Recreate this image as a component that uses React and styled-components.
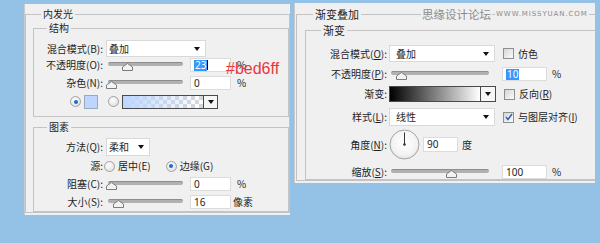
import React from "react";
import styled, { createGlobalStyle } from "styled-components";

const GlobalStyle = createGlobalStyle`
  html, body { margin: 0; padding: 0; }
  body {
    width: 600px;
    height: 243px;
    overflow: hidden;
    background: #93c2e6;
    font-family: "Noto Sans CJK SC", "Noto Sans", sans-serif;
    font-size: 10px;
    color: #1e1e1e;
  }
`;

const Page = styled.div`
  display: flex;
  align-items: flex-start;
  gap: 4px;
  padding: 3px 0 0 24px;
`;

const Panel = styled.div`
  width: ${(p) => p.$w}px;
  height: ${(p) => p.$h}px;
  margin-top: ${(p) => p.$mt || 0}px;
  box-sizing: border-box;
  background: #f0f0f0;
  border-left: 1px solid #c9c9c9;
  overflow: hidden;
`;

const Group = styled.fieldset`
  margin: ${(p) => p.$mt || 0}px 0 0 ${(p) => p.$ml || 0}px;
  padding: 0 0 ${(p) => p.$pb || 0}px ${(p) => p.$pl || 0}px;
  width: ${(p) => (p.$w ? `${p.$w}px` : "auto")};
  border: 1px solid #c3c3c3;
  min-width: 0;
  min-inline-size: 0;
  box-sizing: border-box;
  position: relative;
`;

const Legend = styled.legend`
  padding: 0 2px;
  margin-left: ${(p) => p.$ml}px;
  font-size: ${(p) => p.$fs || 10}px;
  line-height: 14px;
  color: #1e1e1e;
`;

const Row = styled.div`
  display: flex;
  align-items: center;
  height: ${(p) => p.$h}px;
  margin-top: ${(p) => p.$mt || 0}px;
  padding-left: ${(p) => p.$pl || 0}px;
  position: relative;
`;

const Label = styled.span`
  flex: none;
  width: ${(p) => p.$w}px;
  margin-right: ${(p) => p.$gap ?? 3}px;
  text-align: right;
  white-space: nowrap;
  line-height: 14px;
`;

const Key = styled.span`
  text-decoration: underline;
`;

const Select = styled.div`
  flex: none;
  width: ${(p) => p.$w}px;
  height: ${(p) => p.$h}px;
  box-sizing: border-box;
  background: #fff;
  border: 1px solid #d9d9d9;
  display: flex;
  align-items: center;
  justify-content: space-between;
  padding: 0 5px 0 ${(p) => p.$pl || 2}px;
  line-height: 14px;
`;

const Arrow = styled.span`
  width: 0;
  height: 0;
  border-left: 3.5px solid transparent;
  border-right: 3.5px solid transparent;
  border-top: 4px solid #111;
`;

const SliderBox = styled.div`
  flex: none;
  position: relative;
  width: ${(p) => p.$w}px;
  height: 14px;
  &::before {
    content: "";
    position: absolute;
    left: 2px;
    right: 0;
    top: 4px;
    height: 3px;
    border-radius: 2px;
    background: #b1b1b1;
    border-top: 1px solid #8d8d8d;
  }
`;

const ThumbSvg = styled.svg`
  position: absolute;
  top: 5px;
  left: ${(p) => p.$x}px;
`;

const NumBox = styled.div`
  flex: none;
  width: ${(p) => p.$w}px;
  height: ${(p) => p.$h || 14}px;
  margin-left: ${(p) => p.$ml || 0}px;
  box-sizing: border-box;
  background: #fff;
  border: 1px solid #dcdcdc;
  display: flex;
  align-items: center;
  padding-left: 3px;
  font-family: "Noto Sans", "Liberation Sans", sans-serif;
  font-size: 10px;
  line-height: 11px;
`;

const Picked = styled.span`
  background: #3399ff;
  color: #fff;
  padding: 0 1px;
`;

const Caret = styled.span`
  width: 1px;
  height: 10px;
  background: #000;
`;

const Unit = styled.span`
  margin-left: ${(p) => p.$ml || 6}px;
  line-height: 14px;
`;

const Note = styled.span`
  position: absolute;
  left: 192px;
  top: 3px;
  font-family: "Liberation Sans", Arial, sans-serif;
  font-size: 16px;
  line-height: 16px;
  color: #e8383d;
`;

const Radio = styled.span`
  flex: none;
  width: 9px;
  height: 9px;
  margin-left: ${(p) => p.$ml || 0}px;
  border-radius: 50%;
  border: 1px solid #a2a2a2;
  background: radial-gradient(circle at 40% 35%, #ffffff, #d8d8d8);
  display: inline-flex;
  align-items: center;
  justify-content: center;
  &::after {
    content: "";
    width: 4px;
    height: 4px;
    border-radius: 50%;
    background: ${(p) => (p.$on ? "#1d6ad2" : "transparent")};
  }
`;

const RadioText = styled.span`
  margin-left: 3px;
  line-height: 14px;
`;

const Swatch = styled.span`
  flex: none;
  width: 14px;
  height: 14px;
  margin-left: 3px;
  box-sizing: border-box;
  border: 1px solid #9aa8bd;
  background: #bed6ff;
`;

const GradBox = styled.div`
  flex: none;
  display: flex;
  height: ${(p) => p.$h}px;
  margin-left: ${(p) => p.$ml || 0}px;
  box-sizing: border-box;
  border: 1px solid #4a4a4a;
`;

const GradFill = styled.div`
  width: ${(p) => p.$w}px;
  background: ${(p) => p.$bg};
`;

const GradBtn = styled.div`
  width: ${(p) => p.$w}px;
  border-left: 1px solid #4a4a4a;
  background: #f6f6f6;
  display: flex;
  align-items: center;
  justify-content: center;
`;

const Check = styled.span`
  flex: none;
  width: 11px;
  height: 11px;
  margin-left: 8px;
  box-sizing: border-box;
  border: 1px solid #8e8f8f;
  background: linear-gradient(135deg, #d6d6d6, #fbfbfb);
  display: inline-flex;
  align-items: center;
  justify-content: center;
`;

const CheckText = styled.span`
  margin-left: 4px;
  line-height: 14px;
  white-space: nowrap;
`;

const Stamp = styled.div`
  position: absolute;
  top: -14px;
  left: 124px;
  display: flex;
  align-items: center;
  gap: 3px;
  color: #8b8b8b;
`;

const StampCn = styled.span`
  background: #f0f0f0;
  font-size: 11.5px;
  line-height: 14px;
  padding: 0 1px;
`;

const StampEn = styled.span`
  background: #f0f0f0;
  font-family: "DejaVu Sans", sans-serif;
  font-size: 7px;
  letter-spacing: 0.9px;
  line-height: 10px;
  padding: 0 1px;
`;

function Slider({ w, x }) {
  return (
    <SliderBox $w={w}>
      <ThumbSvg $x={x} width="11" height="8" viewBox="0 0 11 8">
        <path d="M5.5 0.5 L10.5 4 V7.5 H0.5 V4 Z" fill="#f3f3f3" stroke="#7c7c7c" />
      </ThumbSvg>
    </SliderBox>
  );
}

function DownArrow() {
  return <Arrow />;
}

function CheckBox({ on }) {
  return (
    <Check>
      {on && (
        <svg width="8" height="8" viewBox="0 0 8 8">
          <path d="M1 4 L3 6.5 L7 1" fill="none" stroke="#2b5fae" strokeWidth="1.4" />
        </svg>
      )}
    </Check>
  );
}

function AngleDial() {
  return (
    <svg width="31" height="31" viewBox="0 0 31 31">
      <defs>
        <radialGradient id="dialFill" cx="50%" cy="45%" r="60%">
          <stop offset="0%" stopColor="#ffffff" />
          <stop offset="70%" stopColor="#f3f3f3" />
          <stop offset="100%" stopColor="#d9d9d9" />
        </radialGradient>
      </defs>
      <circle cx="15.5" cy="15.5" r="14.5" fill="url(#dialFill)" stroke="#a5a5a5" />
      <line x1="15.5" y1="15.5" x2="15.5" y2="3.5" stroke="#333" strokeWidth="1" />
      <circle cx="15.5" cy="15.5" r="1.3" fill="#333" />
    </svg>
  );
}

const checker =
  "linear-gradient(to right, #bed6ff 0%, rgba(190,214,255,0.6) 40%, rgba(190,214,255,0) 100%), repeating-conic-gradient(#d6d6d6 0 25%, #ffffff 0 50%) 0 0 / 8px 8px";

function InnerGlow() {
  return (
    <Panel $w={266} $h={211} $mt={1}>
      <Group $mt={3} $pl={7}>
        <Legend $ml={8}>内发光</Legend>
        <Group $pb={7}>
          <Legend $ml={13}>结构</Legend>
          <Row $h={17} $mt={5}>
            <Label $w={69}>混合模式(B):</Label>
            <Select $w={100} $h={17} $pl={2}>
              叠加
              <DownArrow />
            </Select>
          </Row>
          <Row $h={14} $mt={1}>
            <Label $w={69}>不透明度(O):</Label>
            <Slider w={77} x={16} />
            <NumBox $w={41} $ml={7}>
              <Picked>23</Picked>
              <Caret />
            </NumBox>
            <Unit>%</Unit>
            <Note>#bed6ff</Note>
          </Row>
          <Row $h={14} $mt={4}>
            <Label $w={69}>杂色(N):</Label>
            <Slider w={77} x={0} />
            <NumBox $w={41} $ml={7}>0</NumBox>
            <Unit>%</Unit>
          </Row>
          <Row $h={15} $mt={4} $pl={36}>
            <Radio $on />
            <Swatch />
            <Radio $ml={10} />
            <GradBox $h={14} $ml={3}>
              <GradFill $w={80} $bg={checker} />
              <GradBtn $w={13}>
                <DownArrow />
              </GradBtn>
            </GradBox>
          </Row>
        </Group>
        <Group $mt={3} $pb={2}>
          <Legend $ml={13}>图素</Legend>
          <Row $h={18} $mt={4}>
            <Label $w={69}>方法(Q):</Label>
            <Select $w={44} $h={18} $pl={2}>
              柔和
              <DownArrow />
            </Select>
          </Row>
          <Row $h={14} $mt={3}>
            <Label $w={69} $gap={1}>源:</Label>
            <Radio />
            <RadioText>居中(E)</RadioText>
            <Radio $ml={15} $on />
            <RadioText>边缘(G)</RadioText>
          </Row>
          <Row $h={14} $mt={4}>
            <Label $w={69}>阻塞(C):</Label>
            <Slider w={77} x={0} />
            <NumBox $w={41} $ml={7}>0</NumBox>
            <Unit>%</Unit>
          </Row>
          <Row $h={14} $mt={4}>
            <Label $w={69}>大小(S):</Label>
            <Slider w={77} x={7} />
            <NumBox $w={41} $ml={7}>16</NumBox>
            <Unit $ml={2}>像素</Unit>
          </Row>
        </Group>
      </Group>
    </Panel>
  );
}

function GradientOverlay() {
  return (
    <Panel $w={301} $h={180}>
      <Group $mt={4} $ml={1} $pl={8} $w={330}>
        <Legend $ml={8} $fs={11}>渐变叠加</Legend>
        <Stamp>
          <StampCn>思缘设计论坛</StampCn>
          <StampEn>WWW.MISSYUAN.COM</StampEn>
        </Stamp>
        <Group $mt={2}>
          <Legend $ml={15} $fs={11}>渐变</Legend>
          <Row $h={17} $mt={8}>
            <Label $w={81} $gap={2}>
              混合模式(<Key>O</Key>):
            </Label>
            <Select $w={106} $h={17} $pl={6}>
              叠加
              <DownArrow />
            </Select>
            <CheckBox />
            <CheckText>仿色</CheckText>
          </Row>
          <Row $h={14} $mt={5}>
            <Label $w={81} $gap={2}>
              不透明度(<Key>P</Key>):
            </Label>
            <Slider w={100} x={7} />
            <NumBox $w={45} $ml={13}>
              <Picked>10</Picked>
            </NumBox>
            <Unit $ml={5}>%</Unit>
          </Row>
          <Row $h={16} $mt={5}>
            <Label $w={81} $gap={2}>
              渐变:
            </Label>
            <GradBox $h={16}>
              <GradFill $w={90} $bg="linear-gradient(to right, #000000, #ffffff)" />
              <GradBtn $w={14}>
                <DownArrow />
              </GradBtn>
            </GradBox>
            <CheckBox />
            <CheckText>
              反向(<Key>R</Key>)
            </CheckText>
          </Row>
          <Row $h={18} $mt={6}>
            <Label $w={81} $gap={2}>
              样式(<Key>L</Key>):
            </Label>
            <Select $w={106} $h={18} $pl={6}>
              线性
              <DownArrow />
            </Select>
            <CheckBox on />
            <CheckText>
              与图层对齐(<Key>I</Key>)
            </CheckText>
          </Row>
          <Row $h={31} $mt={3}>
            <Label $w={81} $gap={2}>
              角度(<Key>N</Key>):
            </Label>
            <AngleDial />
            <NumBox $w={35} $h={15} $ml={3}>90</NumBox>
            <Unit $ml={4}>度</Unit>
          </Row>
          <Row $h={14} $mt={5}>
            <Label $w={81} $gap={2}>
              缩放(<Key>S</Key>):
            </Label>
            <Slider w={100} x={57} />
            <NumBox $w={45} $ml={13}>100</NumBox>
            <Unit $ml={5}>%</Unit>
          </Row>
        </Group>
      </Group>
    </Panel>
  );
}

export default function App() {
  return (
    <>
      <GlobalStyle />
      <Page>
        <InnerGlow />
        <GradientOverlay />
      </Page>
    </>
  );
}
